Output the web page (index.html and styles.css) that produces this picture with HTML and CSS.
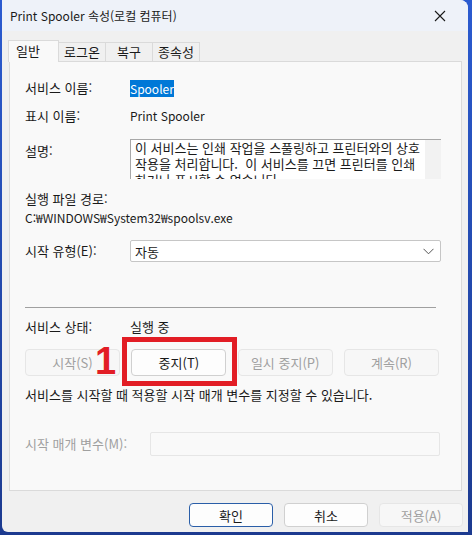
FILE: index.html
```html
<!DOCTYPE html>
<html lang="ko">
<head>
<meta charset="utf-8">
<title>Print Spooler 속성</title>
<link rel="stylesheet" href="styles.css">
</head>
<body>
<div class="window">
  <div class="titlebar">
    <span class="title">Print Spooler 속성(로컬 컴퓨터)</span>
    <svg class="close" width="12" height="12" viewBox="0 0 12 12"><path d="M1 1L11 11M11 1L1 11" stroke="#1a1a1a" stroke-width="1.1" fill="none"/></svg>
  </div>
  <div class="tabs">
    <div class="tab active">일반</div>
    <div class="tab">로그온</div>
    <div class="tab">복구</div>
    <div class="tab">종속성</div>
  </div>
  <div class="panel">
    <div class="row r1"><span class="label">서비스 이름:</span><span class="value latin"><span class="sel">Spooler</span></span></div>
    <div class="row r2"><span class="label">표시 이름:</span><span class="value latin">Print Spooler</span></div>
    <div class="row r3"><span class="label lbl-desc">설명:</span>
      <div class="desc">
        <div class="desc-text">이 서비스는 인쇄 작업을 스풀링하고 프린터와의 상호<br>작용을 처리합니다. &nbsp;이 서비스를 끄면 프린터를 인쇄<br>하거나 표시할 수 없습니다.</div>
        <div class="scroll"></div>
      </div>
    </div>
    <div class="plain r4">실행 파일 경로:</div>
    <div class="plain r5 latin">C:₩WINDOWS₩System32₩spoolsv.exe</div>
    <div class="row r6"><span class="label">시작 유형(E):</span>
      <div class="select"><span>자동</span>
        <svg width="11" height="7" viewBox="0 0 11 7"><path d="M0.5 0.8L5.5 5.8L10.5 0.8" stroke="#555" stroke-width="1" fill="none"/></svg>
      </div>
    </div>
    <div class="sep"></div>
    <div class="row r7"><span class="label">서비스 상태:</span><span class="value">실행 중</span></div>
    <div class="btnrow">
      <div class="btn disabled">시작(S)</div>
      <div class="btn">중지(T)</div>
      <div class="btn disabled">일시 중지(P)</div>
      <div class="btn disabled">계속(R)</div>
      <div class="highlight"></div>
      <div class="num">1</div>
    </div>
    <div class="plain r8">서비스를 시작할 때 적용할 시작 매개 변수를 지정할 수 있습니다.</div>
    <div class="row r9"><span class="label gray">시작 매개 변수(M):</span><div class="param"></div></div>
  </div>
  <div class="footer">
    <div class="fbtn primary">확인</div>
    <div class="fbtn">취소</div>
    <div class="fbtn disabled">적용(A)</div>
  </div>
</div>
</body>
</html>
```
FILE: styles.css
```css
html, body {
  margin: 0;
  padding: 0;
}
body {
  width: 472px;
  height: 535px;
  background: linear-gradient(180deg, #2b5bd0 0%, #1c3a8f 100%);
  font-family: "Noto Sans CJK KR", sans-serif;
  font-size: 13px;
  color: #1a1a1a;
  padding: 0 4px 3px 2px;
  box-sizing: border-box;
  overflow: hidden;
}
.latin { font-size: 12px; }
.window {
  width: 466px;
  height: 532px;
  background: #f0f0f0;
  border-radius: 0 8px 0 6px;
  overflow: hidden;
  display: flex;
  flex-direction: column;
}
.titlebar {
  height: 31px;
  background: #eef2f9;
  display: flex;
  align-items: center;
  justify-content: space-between;
  padding: 0 22px 0 8px;
  flex-shrink: 0;
}
.title {
  font-size: 12px;
  line-height: 16px;
  color: #1a1a1a;
}
.close { display: block; }
.tabs {
  display: flex;
  margin-top: 10px;
  padding-left: 6px;
  height: 20px;
  align-items: flex-end;
  position: relative;
  z-index: 2;
}
.tab {
  height: 19px;
  box-sizing: border-box;
  border: 1px solid #dadada;
  border-bottom: none;
  border-left: none;
  background: #f0f0f0;
  line-height: 18px;
  text-align: center;
}
.tab:nth-child(2) { width: 47px; }
.tab:nth-child(3) { width: 47px; }
.tab:nth-child(4) { width: 47px; }
.tab.active {
  width: 51px;
  height: 22px;
  margin-bottom: -1px;
  background: #f9f9f9;
  border-left: 1px solid #dadada;
  text-align: left;
  padding-left: 7px;
  line-height: 20px;
}
.panel {
  margin-left: 7px;
  width: 453px;
  height: 430px;
  box-sizing: border-box;
  border: 1px solid #dadada;
  background: #f9f9f9;
  padding: 18px 0 0 15px;
  position: relative;
  z-index: 1;
}
.row {
  display: flex;
  align-items: flex-start;
}
.label {
  width: 105px;
  flex-shrink: 0;
  line-height: 16px;
}
.value { line-height: 16px; }
.sel {
  background: #0078d7;
  color: #fff;
  display: inline-block;
  line-height: 17px;
}
.r2 { margin-top: 11px; }
.r3 { margin-top: 15px; }
.lbl-desc { margin-top: 4px; }
.desc {
  width: 311px;
  height: 40px;
  box-sizing: border-box;
  border-top: 1px solid #a8a8a8;
  border-left: 1px solid #a8a8a8;
  background: #fff;
  overflow: hidden;
  display: flex;
}
.desc-text {
  flex: 1;
  padding: 0 0 0 4px;
  line-height: 16px;
  white-space: nowrap;
  overflow: hidden;
}
.scroll {
  width: 16px;
  background: #f2f2f2;
}
.plain { line-height: 16px; }
.r4 { margin-top: 12px; }
.r5 { margin-top: 3px; }
.r6 { margin-top: 14px; }
.r6 .label { margin-top: 3px; }
.select {
  width: 311px;
  height: 22px;
  box-sizing: border-box;
  border: 1px solid #c6c6c6;
  border-radius: 2px;
  background: #fff;
  display: flex;
  align-items: center;
  justify-content: space-between;
  padding: 0 6px 0 4px;
}
.sep {
  margin-top: 45px;
  width: 411px;
  height: 1px;
  background: #a0a0a0;
}
.r7 { margin-top: 11px; }
.btnrow {
  margin-top: 14px;
  width: 414px;
  display: flex;
  justify-content: space-between;
  position: relative;
}
.btn {
  width: 95px;
  height: 27px;
  box-sizing: border-box;
  border: 1px solid #d0d0d0;
  border-radius: 4px;
  background: #fdfdfd;
  display: flex;
  align-items: center;
  justify-content: center;
}
.btn.disabled, .fbtn.disabled {
  border-color: #e6e6e6;
  background: #f7f7f7;
  color: #a0a0a0;
}
.highlight {
  position: absolute;
  left: 97px;
  top: -12px;
  width: 115px;
  height: 49px;
  box-sizing: border-box;
  border: 5px solid #e21d25;
}
.num {
  position: absolute;
  left: 70px;
  top: -8px;
  font-family: "Liberation Sans", sans-serif;
  font-weight: bold;
  font-size: 38px;
  line-height: 40px;
  color: #e21d25;
}
.r8 { margin-top: 11px; }
.r9 { margin-top: 29px; }
.r9 .label {
  width: 125px;
  margin-top: 4px;
}
.gray { color: #a0a0a0; }
.param {
  width: 290px;
  height: 24px;
  box-sizing: border-box;
  border: 1px solid #e6e6e6;
  border-radius: 2px;
  background: #f9f9f9;
}
.footer {
  display: flex;
  justify-content: flex-end;
  gap: 11px;
  padding: 12px 5px 0 0;
}
.fbtn {
  width: 84px;
  height: 24px;
  box-sizing: border-box;
  border: 1px solid #d0d0d0;
  border-radius: 4px;
  background: #fdfdfd;
  display: flex;
  align-items: center;
  justify-content: center;
}
.fbtn.primary {
  border: 1px solid #2a5ea8;
  box-shadow: inset 0 0 0 1px #fdfdfd;
}
```
